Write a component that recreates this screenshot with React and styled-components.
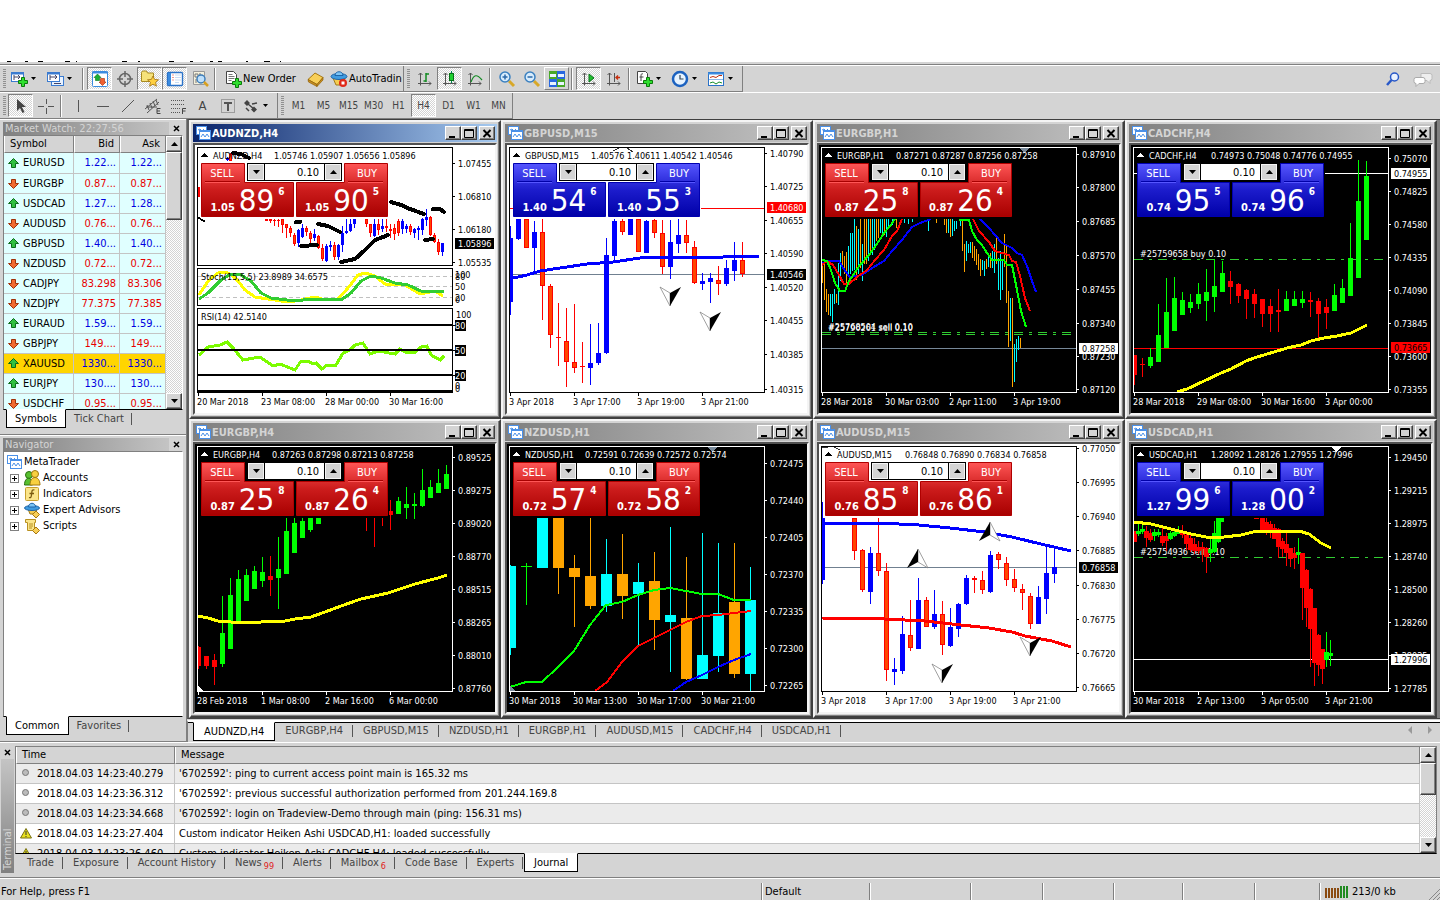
import React, { useState } from 'react';
import styled, { createGlobalStyle, css } from 'styled-components';

// chart series are stored on a grid of 3 units per pixel, origin at the window frame
const gx = v => Math.floor(v / 3) - 7;
const gy = (v, top) => Math.floor(v / 3) - top;
const line = (pts, top) => pts.map(([x, y]) => `${Math.round(x / 3) - 7},${Math.round(y / 3) - top}`).join(' ');

const RED = { fill: '#ff0000', inner: '#ff4500' };
const BLUE = { fill: '#0000ff' };
const LIME = { fill: '#00ff00' };
const PURERED = { fill: '#ff0000' };
const AQUA = { fill: '#00ffff' };
const ORANGE = { fill: '#ffa500' };
const kinds = { r: RED, b: BLUE, g: LIME, p: PURERED, c: AQUA, o: ORANGE };

// candle: [kind, x, high, bodyTop, bodyBottom, low]
const charts = [
    {
        name: 'AUDNZD,H4', active: true, theme: 'light', top: 27, panes: true, bodyWidth: 3,
        infoX: 79, info: '1.05746 1.05907 1.05656 1.05896',
        panel: 'red', sell: ['1.05', '89', '6'], buy: ['1.05', '90', '5'],
        axis: [['1.07455', 135], ['1.06810', 235], ['1.06180', 334], ['1.05535', 433]],
        tags: [['1.05896', 376, '#000', '#fff']],
        dates: ['20 Mar 2018', '23 Mar 08:00', '28 Mar 00:00', '30 Mar 16:00'],
        candles: [
            ['r', 31, 207, 207, 238, 238], ['b', 117, 118, 122, 128, 130], ['r', 127, 105, 108, 128, 130],
            ['r', 235, 303, 303, 308, 308], ['r', 247, 303, 303, 309, 315], ['r', 259, 303, 308, 312, 325], ['r', 271, 303, 308, 312, 328],
            ['r', 283, 303, 303, 320, 345], ['r', 295, 318, 320, 332, 360], ['r', 307, 325, 330, 345, 358], ['r', 319, 345, 352, 378, 385],
            ['b', 331, 335, 338, 378, 388], ['b', 343, 318, 330, 357, 360], ['r', 355, 325, 330, 342, 355], ['r', 367, 340, 345, 362, 385],
            ['b', 379, 335, 350, 362, 370], ['r', 391, 352, 355, 390, 395], ['r', 403, 380, 390, 423, 430], ['b', 415, 380, 384, 428, 435],
            ['b', 427, 370, 382, 388, 400], ['r', 439, 372, 382, 417, 425], ['b', 451, 378, 382, 418, 425], ['b', 463, 325, 346, 383, 402],
            ['b', 475, 305, 340, 346, 350], ['b', 487, 305, 320, 341, 345], ['b', 499, 303, 303, 319, 331], ['r', 535, 303, 305, 320, 328],
            ['r', 547, 318, 320, 348, 356], ['b', 559, 305, 320, 355, 360], ['r', 571, 305, 318, 335, 352], ['b', 583, 305, 325, 335, 345],
            ['r', 595, 305, 325, 330, 345], ['r', 607, 320, 335, 340, 363], ['r', 619, 318, 332, 350, 365], ['r', 631, 305, 310, 345, 355],
            ['b', 643, 305, 310, 335, 350], ['b', 655, 318, 325, 335, 345], ['r', 667, 318, 325, 342, 350], ['b', 679, 330, 335, 348, 360],
            ['b', 691, 325, 332, 338, 368], ['b', 703, 300, 303, 335, 350], ['b', 715, 275, 297, 305, 325], ['r', 727, 295, 297, 350, 355],
            ['r', 739, 345, 352, 372, 375], ['r', 751, 365, 372, 402, 412], ['b', 763, 375, 376, 402, 415],
        ],
        lines: [
            ['#000', 4, [[610, 252], [640, 262], [665, 272], [708, 287]]], ['#000', 4, [[735, 272], [755, 272], [768, 281]]],
            ['#000', 4, [[325, 312], [336, 312]]], ['#000', 4, [[338, 383], [386, 381]]],
            ['#000', 4, [[390, 317], [420, 325], [457, 343]]],
            ['#000', 4, [[460, 433], [500, 422], [530, 396], [560, 367], [585, 358], [600, 350]]],
            ['#000', 4, [[710, 367], [735, 362]]], ['#000', 4, [[135, 105], [160, 107], [182, 120]]], ['#000', 2, [[33, 300], [48, 308]]],
        ],
    },
    {
        name: 'GBPUSD,M15', theme: 'light', top: 27, bodyWidth: 5,
        infoX: 84, info: '1.40576 1.40611 1.40542 1.40546',
        panel: 'blue', sell: ['1.40', '54', '6'], buy: ['1.40', '55', '3'],
        axis: [['1.40790', 106], ['1.40725', 205], ['1.40655', 307], ['1.40590', 407], ['1.40520', 509], ['1.40455', 608], ['1.40385', 709], ['1.40315', 814]],
        tags: [['1.40680', 268, '#ff0000', '#fff'], ['1.40546', 470, '#000', '#fff']],
        levels: [['#ff0000', 270], ['#708090', 469]],
        dates: ['3 Apr 2018', '3 Apr 17:00', '3 Apr 19:00', '3 Apr 21:00'],
        candles: [
            ['b', 31, 324, 360, 551, 592], ['b', 55, 303, 303, 362, 367], ['r', 79, 303, 303, 391, 391], ['b', 103, 310, 343, 391, 462],
            ['r', 127, 303, 343, 506, 605], ['r', 151, 500, 504, 650, 692], ['r', 175, 555, 658, 662, 743], ['r', 199, 570, 670, 734, 806],
            ['r', 223, 558, 733, 751, 764], ['r', 247, 672, 744, 748, 795], ['b', 271, 618, 735, 750, 800], ['b', 295, 615, 706, 737, 742],
            ['b', 319, 360, 411, 704, 707], ['b', 343, 303, 309, 413, 431], ['r', 367, 305, 309, 343, 353], ['b', 391, 303, 303, 350, 350],
            ['r', 415, 303, 303, 403, 403], ['b', 439, 306, 309, 404, 404], ['r', 463, 305, 307, 346, 362], ['r', 487, 307, 346, 449, 470],
            ['b', 511, 307, 373, 449, 483], ['b', 535, 303, 351, 377, 405], ['r', 559, 307, 352, 377, 406], ['r', 583, 370, 388, 497, 500],
            ['b', 607, 465, 490, 500, 515], ['b', 631, 466, 480, 491, 557], ['r', 655, 444, 487, 500, 531], ['b', 679, 426, 450, 497, 503],
            ['b', 703, 372, 426, 458, 488], ['r', 727, 372, 427, 470, 476],
        ],
        lines: [['#0000ff', 3, [[30, 480], [55, 478], [80, 470], [120, 460], [180, 450], [260, 439], [340, 432], [420, 421], [500, 417], [670, 418], [690, 414], [778, 414]]]],
        arrows: [['down', 511, 508], ['down', 631, 583]],
        specks: [[340, 100, 358, 90], [383, 90, 400, 102]],
    },
    {
        name: 'EURGBP,H1', theme: 'dark', top: 27, bodyWidth: 1,
        infoX: 77, info: '0.87271 0.87287 0.87256 0.87258',
        panel: 'red', sell: ['0.87', '25', '8'], buy: ['0.87', '26', '4'],
        axis: [['0.87910', 108], ['0.87800', 208], ['0.87685', 310], ['0.87570', 412], ['0.87455', 514], ['0.87340', 616], ['0.87230', 716], ['0.87120', 814]],
        tags: [['0.87258', 691, '#fff', '#000']],
        levels: [['#778899', 691]],
        orders: [['#25768504 sell 0.10', 643], ['#25790261 sell 0.10', 649]],
        marker: '#778899',
        dates: ['28 Mar 2018', '30 Mar 03:00', '2 Apr 11:00', '3 Apr 19:00'],
        bars: {
            '#ffa500': [[31, 440, 497], [37, 440, 548], [43, 515, 585], [49, 530, 592], [73, 530, 558], [91, 400, 452], [97, 415, 470], [103, 402, 495], [133, 325, 488], [145, 303, 450], [157, 305, 440], [163, 303, 438], [175, 303, 412], [193, 303, 370], [199, 303, 360], [217, 303, 350], [253, 303, 330], [373, 303, 315], [397, 303, 322], [403, 303, 345], [415, 303, 358], [451, 303, 398], [457, 378, 463], [481, 372, 420], [487, 385, 430], [493, 395, 442], [499, 408, 455], [505, 425, 475], [523, 425, 455], [535, 405, 450], [553, 362, 440], [577, 350, 450], [583, 385, 555], [589, 520, 688], [601, 540, 806], [625, 662, 692]],
            '#00ffff': [[55, 528, 595], [61, 530, 615], [67, 515, 560], [79, 435, 562], [85, 405, 490], [109, 385, 475], [115, 345, 468], [121, 345, 460], [127, 303, 455], [139, 335, 470], [151, 380, 492], [169, 303, 430], [181, 303, 410], [187, 303, 395], [205, 303, 345], [211, 303, 345], [223, 303, 357], [229, 303, 330], [241, 303, 320], [277, 303, 315], [289, 303, 318], [301, 303, 312], [349, 303, 340], [409, 303, 345], [421, 303, 355], [427, 310, 340], [433, 310, 335], [445, 303, 325], [463, 370, 430], [469, 380, 408], [475, 372, 405], [511, 428, 458], [517, 430, 475], [529, 418, 448], [541, 400, 450], [547, 380, 468], [559, 420, 515], [565, 400, 548], [571, 430, 518], [595, 540, 668], [607, 678, 792], [613, 665, 733], [619, 655, 698]],
        },
        candles: [],
        lines: [
            ['#0000ff', 2, [[30, 435], [50, 428], [80, 430], [100, 460], [115, 478], [150, 472], [180, 450], [215, 430], [240, 400], [270, 365], [300, 328], [325, 315], [358, 303]]],
            ['#0000ff', 2, [[505, 303], [530, 330], [570, 375], [600, 390], [615, 405], [630, 410], [645, 445], [660, 490], [673, 522]]],
            ['#ff0000', 2, [[30, 440], [45, 430], [62, 440], [80, 470], [95, 498], [112, 498], [135, 478], [165, 455], [190, 425], [215, 395], [240, 355], [255, 340], [270, 303]]],
            ['#ff0000', 2, [[483, 303], [500, 340], [530, 372], [550, 400], [590, 412], [600, 430], [612, 432], [625, 475], [640, 540], [655, 578]]],
            ['#00ff00', 2, [[30, 427], [45, 430], [58, 455], [70, 495], [85, 520], [98, 520], [112, 490], [145, 440], [170, 410], [200, 370], [215, 345], [235, 325], [248, 303]]],
            ['#00ff00', 2, [[440, 306], [470, 306], [480, 340], [495, 365], [510, 380], [525, 405], [540, 425], [575, 427], [585, 440], [600, 440], [607, 470], [618, 530], [628, 580], [642, 628]]],
        ],
    },
    {
        name: 'CADCHF,H4', theme: 'dark', top: 27, bodyWidth: 5,
        infoX: 80, info: '0.74973 0.75048 0.74776 0.74955',
        panel: 'blue', sell: ['0.74', '95', '5'], buy: ['0.74', '96', '6'],
        axis: [['0.75070', 121], ['0.74825', 220], ['0.74580', 319], ['0.74335', 418], ['0.74090', 517], ['0.73845', 616], ['0.73600', 716], ['0.73355', 814]],
        tags: [['0.74955', 166, '#fff', '#000'], ['0.73665', 689, '#ff0000', '#000']],
        levels: [['#fff', 166], ['#ff0000', 691]],
        orders: [['#25759658 buy 0.10', 424]],
        dates: ['28 Mar 2018', '29 Mar 08:00', '30 Mar 16:00', '3 Apr 00:00'],
        candles: [
            ['p', 31, 712, 712, 771, 803], ['p', 55, 722, 740, 743, 780], ['g', 79, 692, 717, 744, 752], ['g', 103, 560, 651, 731, 732],
            ['g', 127, 480, 582, 690, 690], ['g', 151, 477, 540, 639, 640], ['g', 175, 522, 546, 591, 591], ['g', 199, 530, 552, 570, 588],
            ['g', 223, 495, 530, 561, 572], ['g', 247, 453, 522, 549, 608], ['g', 271, 425, 504, 537, 585], ['g', 295, 430, 465, 522, 522],
            ['p', 319, 459, 491, 510, 557], ['p', 343, 497, 498, 533, 557], ['p', 367, 513, 516, 543, 603], ['p', 391, 515, 528, 557, 603],
            ['p', 415, 543, 543, 587, 626], ['p', 439, 543, 564, 587, 641], ['p', 463, 513, 576, 581, 641], ['g', 487, 521, 543, 579, 579],
            ['g', 511, 519, 543, 564, 564], ['g', 535, 519, 543, 555, 570], ['p', 559, 522, 546, 551, 597], ['p', 583, 540, 549, 587, 660],
            ['p', 607, 545, 567, 584, 636], ['g', 631, 498, 531, 579, 579], ['g', 655, 483, 510, 555, 555], ['g', 679, 315, 420, 534, 534],
            ['g', 703, 126, 249, 480, 480], ['g', 727, 129, 174, 366, 366],
        ],
        lines: [['#ffff00', 3, [[158, 823], [190, 812], [240, 790], [290, 765], [320, 752], [365, 730], [400, 717], [450, 703], [490, 690], [530, 680], [560, 668], [600, 660], [640, 655], [680, 645], [730, 620]]]],
    },
    {
        name: 'EURGBP,H4', theme: 'dark', top: 26, bodyWidth: 5,
        infoX: 77, info: '0.87263 0.87298 0.87213 0.87258',
        panel: 'red', sell: ['0.87', '25', '8'], buy: ['0.87', '26', '4'],
        axis: [['0.89525', 118], ['0.89275', 217], ['0.89020', 316], ['0.88770', 415], ['0.88515', 514], ['0.88265', 613], ['0.88010', 712], ['0.87760', 811]],
        tags: [], corner: '#fff',
        dates: ['28 Feb 2018', '1 Mar 08:00', '2 Mar 16:00', '6 Mar 00:00'],
        candles: [
            ['p', 31, 686, 688, 744, 755], ['p', 55, 714, 714, 743, 752], ['p', 79, 708, 726, 746, 800], ['g', 103, 534, 645, 738, 746],
            ['g', 127, 480, 531, 692, 692], ['g', 151, 456, 483, 609, 610], ['g', 175, 453, 471, 549, 549], ['g', 199, 444, 459, 513, 513],
            ['g', 223, 417, 462, 489, 507], ['p', 247, 414, 474, 485, 533], ['g', 271, 357, 453, 480, 572], ['g', 295, 300, 339, 468, 468],
            ['g', 319, 300, 315, 405, 405], ['g', 343, 300, 309, 360, 360], ['g', 367, 300, 300, 335, 342], ['g', 391, 300, 300, 318, 318],
            ['p', 535, 300, 280, 290, 339], ['p', 559, 300, 280, 290, 386], ['p', 583, 300, 280, 290, 323], ['p', 607, 248, 279, 292, 339],
            ['g', 631, 237, 249, 288, 288], ['g', 655, 207, 258, 270, 303], ['g', 679, 225, 258, 264, 303], ['g', 703, 153, 216, 263, 266],
            ['g', 727, 186, 207, 240, 240], ['g', 751, 153, 195, 225, 225], ['g', 775, 141, 168, 213, 213],
        ],
        lines: [['#ffff00', 3, [[30, 595], [60, 600], [90, 608], [130, 613], [220, 613], [245, 610], [265, 613], [290, 610], [320, 602], [370, 597], [410, 583], [460, 563], [520, 544], [600, 524], [680, 497], [750, 480], [777, 471]]]],
    },
    {
        name: 'NZDUSD,H1', theme: 'dark', top: 26, bodyWidth: 11,
        infoX: 78, info: '0.72591 0.72639 0.72572 0.72574',
        panel: 'red', sell: ['0.72', '57', '4'], buy: ['0.72', '58', '2'],
        axis: [['0.72475', 136], ['0.72440', 247], ['0.72405', 358], ['0.72370', 469], ['0.72335', 580], ['0.72300', 691], ['0.72265', 802]],
        tags: [], marker: '#778899', corner: '#778899',
        dates: ['30 Mar 2018', '30 Mar 13:00', '30 Mar 17:00', '30 Mar 21:00'],
        candles: [
            ['c', 31, 441, 444, 690, 711], ['g', 79, 437, 444, 446, 564], ['c', 127, 300, 300, 450, 450], ['o', 175, 300, 300, 450, 528],
            ['o', 223, 411, 450, 477, 627], ['o', 271, 300, 474, 564, 573], ['c', 319, 363, 468, 564, 582], ['o', 367, 348, 468, 534, 603],
            ['c', 415, 435, 492, 528, 680], ['o', 463, 402, 489, 606, 696], ['c', 511, 327, 591, 612, 762], ['o', 559, 417, 600, 783, 785],
            ['c', 607, 345, 711, 783, 783], ['c', 655, 375, 585, 714, 762], ['o', 703, 375, 552, 768, 780], ['c', 751, 447, 546, 768, 820],
        ],
        lines: [
            ['#00ff00', 2, [[30, 808], [79, 793], [127, 791], [175, 746], [223, 700], [271, 620], [319, 560], [367, 552], [415, 530], [463, 516], [511, 509], [559, 520], [607, 527], [655, 528], [703, 545], [753, 546]]],
            ['#ff0000', 2, [[285, 820], [320, 793], [367, 733], [415, 683], [463, 661], [511, 635], [559, 612], [607, 595], [655, 592], [703, 586], [753, 580]]],
            ['#0000ff', 2, [[520, 820], [559, 793], [607, 772], [655, 748], [703, 727], [753, 707]]],
        ],
    },
    {
        name: 'AUDUSD,M15', theme: 'light', top: 26, bodyWidth: 5,
        infoX: 86, info: '0.76848 0.76890 0.76834 0.76858',
        panel: 'red', sell: ['0.76', '85', '8'], buy: ['0.76', '86', '1'],
        axis: [['0.77050', 91], ['0.76995', 193], ['0.76940', 295], ['0.76885', 397], ['0.76830', 502], ['0.76775', 604], ['0.76720', 706], ['0.76665', 808]],
        tags: [['0.76858', 448, '#000', '#fff']],
        levels: [['#708090', 448]],
        dates: ['3 Apr 2018', '3 Apr 17:00', '3 Apr 19:00', '3 Apr 21:00'],
        candles: [
            ['b', 31, 252, 300, 485, 497], ['r', 127, 300, 300, 398, 425], ['r', 151, 395, 397, 518, 524], ['b', 175, 387, 405, 521, 557],
            ['r', 199, 300, 406, 461, 474], ['r', 223, 435, 460, 758, 789], ['b', 247, 720, 753, 761, 801], ['b', 271, 594, 648, 758, 768],
            ['r', 295, 546, 652, 691, 698], ['b', 319, 480, 546, 692, 692], ['r', 343, 538, 546, 626, 628], ['b', 367, 516, 588, 626, 634],
            ['r', 391, 549, 589, 683, 710], ['b', 415, 570, 629, 687, 687], ['b', 439, 555, 558, 632, 656], ['b', 463, 471, 480, 557, 560],
            ['r', 487, 474, 481, 488, 524], ['r', 511, 459, 487, 518, 527], ['b', 535, 399, 411, 521, 524], ['r', 559, 402, 409, 428, 452],
            ['r', 583, 417, 436, 488, 504], ['r', 607, 453, 484, 512, 521], ['r', 631, 498, 514, 527, 576], ['r', 655, 525, 535, 620, 632],
            ['b', 679, 504, 537, 617, 618], ['b', 703, 380, 465, 542, 590], ['b', 727, 390, 447, 467, 494],
        ],
        lines: [
            ['#0000ff', 3, [[30, 314], [200, 314], [320, 322], [415, 329], [520, 343], [600, 357], [700, 380], [778, 400]]],
            ['#ff0000', 3, [[30, 601], [220, 602], [340, 610], [420, 618], [530, 631], [600, 643], [640, 655], [720, 670], [778, 688]]],
        ],
        arrows: [['up', 319, 393], ['up', 535, 312], ['down', 391, 738], ['down', 655, 659]],
        specks: [[31, 92, 48, 87], [66, 87, 84, 98]],
    },
    {
        name: 'USDCAD,H1', theme: 'dark', top: 26, bodyWidth: 5,
        infoX: 80, info: '1.28092 1.28126 1.27955 1.27996',
        panel: 'blue', sell: ['1.27', '99', '6'], buy: ['1.28', '00', '2'],
        axis: [['1.29450', 118], ['1.29215', 217], ['1.28975', 316], ['1.28740', 415], ['1.28500', 514], ['1.28260', 613], ['1.28025', 712], ['1.27785', 811]],
        tags: [['1.27996', 724, '#fff', '#000']],
        levels: [['#fff', 724]],
        orders: [['#25754936 sell 0.10', 418]],
        marker: '#fff',
        dates: ['30 Mar 2018', '2 Apr 13:00', '3 Apr 05:00', '3 Apr 21:00'],
        candles: [
            ['p', 31, 340, 340, 372, 372], ['g', 43, 310, 340, 350, 355], ['g', 55, 318, 335, 345, 348], ['p', 67, 325, 340, 360, 388],
            ['p', 79, 335, 345, 365, 375], ['g', 91, 335, 343, 355, 372], ['g', 103, 335, 342, 350, 360], ['p', 115, 330, 355, 375, 385],
            ['p', 127, 345, 355, 370, 400], ['g', 139, 340, 347, 365, 368], ['g', 151, 335, 342, 355, 360], ['g', 163, 325, 340, 348, 350],
            ['p', 175, 322, 342, 352, 362], ['p', 187, 340, 352, 380, 398], ['p', 199, 350, 360, 395, 405], ['p', 211, 362, 378, 400, 410],
            ['p', 223, 370, 388, 400, 410], ['p', 235, 372, 388, 395, 432], ['p', 247, 388, 392, 418, 465], ['g', 259, 365, 395, 408, 435],
            ['g', 271, 310, 345, 403, 405], ['g', 283, 300, 300, 373, 375], ['g', 293, 300, 300, 312, 312], ['p', 397, 300, 300, 303, 303],
            ['p', 415, 300, 300, 338, 340], ['p', 427, 300, 314, 345, 350], ['p', 439, 310, 318, 345, 360], ['p', 451, 320, 330, 362, 365],
            ['p', 463, 330, 335, 388, 420], ['p', 475, 360, 370, 393, 418], ['p', 487, 345, 378, 405, 445], ['p', 499, 390, 392, 425, 447],
            ['p', 511, 388, 405, 420, 455], ['g', 523, 362, 402, 412, 440], ['p', 535, 405, 405, 510, 605], ['p', 547, 455, 456, 570, 628],
            ['p', 559, 510, 513, 632, 747], ['p', 571, 570, 570, 735, 803], ['p', 583, 650, 651, 740, 777], ['p', 595, 693, 693, 752, 798],
            ['g', 607, 642, 702, 725, 747], ['g', 619, 668, 705, 714, 745],
        ],
        lines: [['#ffff00', 3, [[30, 311], [80, 318], [140, 332], [200, 347], [260, 360], [300, 358], [350, 350], [400, 338], [460, 338], [500, 340], [525, 338], [555, 348], [590, 375], [622, 391]]]],
    },
];

const stochFast = [[32, 530], [60, 490], [90, 465], [115, 462], [135, 475], [150, 490], [170, 515], [200, 538], [240, 542], [300, 552], [340, 547], [380, 536], [410, 547], [450, 543], [480, 510], [510, 470], [530, 466], [560, 475], [590, 497], [650, 500], [695, 528], [740, 518], [765, 535]];
const stochSlow = [[32, 542], [60, 525], [100, 485], [130, 467], [160, 470], [190, 490], [220, 525], [250, 541], [320, 550], [370, 543], [460, 545], [490, 525], [520, 490], [550, 473], [580, 480], [620, 495], [660, 500], [700, 520], [767, 522]];
const rsi = [[32, 710], [60, 687], [95, 680], [118, 672], [135, 690], [165, 725], [215, 716], [255, 745], [275, 738], [322, 755], [340, 730], [360, 730], [375, 738], [385, 735], [403, 752], [418, 740], [445, 740], [465, 705], [485, 697], [500, 682], [525, 676], [545, 707], [570, 700], [620, 707], [635, 692], [650, 703], [680, 703], [700, 687], [716, 684], [730, 710], [755, 725], [767, 715]];

const quotes = [
    ['EURUSD', '1.22...', '1.22...', true], ['EURGBP', '0.87...', '0.87...', false], ['USDCAD', '1.27...', '1.28...', true],
    ['AUDUSD', '0.76...', '0.76...', false], ['GBPUSD', '1.40...', '1.40...', true], ['NZDUSD', '0.72...', '0.72...', false],
    ['CADJPY', '83.298', '83.306', false], ['NZDJPY', '77.375', '77.385', false], ['EURAUD', '1.59...', '1.59...', true],
    ['GBPJPY', '149....', '149....', false], ['XAUUSD', '1330...', '1330...', true], ['EURJPY', '130....', '130....', true],
    ['USDCHF', '0.95...', '0.95...', false],
];

const journal = [
    ['info', '2018.04.03 14:23:40.279', "'6702592': ping to current access point main is 165.32 ms"],
    ['info', '2018.04.03 14:23:36.312', "'6702592': previous successful authorization performed from 201.244.169.8"],
    ['info', '2018.04.03 14:23:34.668', "'6702592': login on Tradeview-Demo through main (ping: 156.31 ms)"],
    ['warn', '2018.04.03 14:23:27.404', 'Custom indicator Heiken Ashi USDCAD,H1: loaded successfully'],
    ['warn', '2018.04.03 14:23:26.460', 'Custom indicator Heiken Ashi CADCHF,H4: loaded successfully'],
];

const chartTabs = ['AUDNZD,H4', 'EURGBP,H4', 'GBPUSD,M15', 'NZDUSD,H1', 'EURGBP,H1', 'AUDUSD,M15', 'CADCHF,H4', 'USDCAD,H1'];
const terminalTabs = [['Trade'], ['Exposure'], ['Account History'], ['News', '99'], ['Alerts'], ['Mailbox', '6'], ['Code Base'], ['Experts'], ['Journal']];
const periods = ['M1', 'M5', 'M15', 'M30', 'H1', 'H4', 'D1', 'W1', 'MN'];

/* ---------- icons ---------- */

const Ico = ({ children, w = 18, h = 18 }) => <svg width={w} height={h} viewBox={`0 0 ${w} ${h}`} aria-hidden="true">{children}</svg>;
const Plus = ({ x, y }) => <path transform={`translate(${x} ${y})`} d="M3.5.5h3v3h3v3h-3v3h-3v-3h-3v-3h3z" fill="#2fe02f" stroke="#0a7a0a" />;
const Axes = () => <path d="M4.500 3v12.500M2.500 5l2-2 2 2M2 13.500h13M13 11.500l2 2-2 2" fill="none" stroke="#555" />;
const MiniChart = () => (
    <>
        <rect x="1.500" y="2.500" width="12" height="9" fill="#fff" stroke="#3a7bd0" /><path d="M1 3.500h13" stroke="#3a7bd0" strokeWidth="2" />
    </>
);
const icons = {
    newChart: <Ico><MiniChart /><path d="M4 5v5M4 7h6M8 5l2 2-2 2" stroke="#446" fill="none" /><Plus x={8} y={7} /></Ico>,
    profiles: <Ico><rect x="5.500" y="6.500" width="12" height="9" fill="#e8f2ff" stroke="#3a7bd0" /><MiniChart /><path d="M4 5v5M4 7h7M9 5l2 2-2 2M8 13.500h7" stroke="#446" fill="none" /></Ico>,
    market: <Ico><rect x="1.500" y="1.500" width="15" height="15" rx="1" fill="#fff" stroke="#3a8be0" /><path d="M1 2.500h16" stroke="#3a8be0" strokeWidth="2" /><path d="M6.500 4l3.500 3.500H8.500v3h-4v-3H3z" fill="#18b030" stroke="#087018" strokeWidth=".6" /><path d="M11.500 15.500L8 12h1.500V8.500h4V12H15z" fill="#f06030" stroke="#a02808" strokeWidth=".6" /></Ico>,
    target: <Ico><circle cx="9" cy="9" r="5.500" fill="none" stroke="#666" strokeWidth="1.500" /><path d="M9 1v6M9 11v6M1 9h6M11 9h6" stroke="#666" strokeWidth="1.500" /></Ico>,
    folderStar: <Ico><path d="M.5 11.500v-9l1-1.500h4l1 2h6v8.500z" fill="#f6e27a" stroke="#a98a20" /><path d="M12 6l1.600 3.400 3.900.4-2.900 2.500.8 3.900-3.400-2-3.400 2 .8-3.900-2.900-2.500 3.900-.4z" fill="#ffd040" stroke="#a07010" strokeWidth=".8" /></Ico>,
    terminal: <Ico><rect x="1.500" y="2.500" width="15" height="13" rx="1" fill="#fff" stroke="#2a72c8" strokeWidth="1.400" /><rect x="2" y="3" width="3" height="12" fill="#3a8be0" /><path d="M6.500 5h1M6.500 7.500h1M6.500 10h1" stroke="#e03020" /><path d="M9 5h6M9 7.500h6M9 10h6M9 12.500h4" stroke="#c8dcf4" /></Ico>,
    tester: <Ico><path d="M2.500 1.500h11v13h-11z" fill="#f4f0dc" stroke="#999" /><path d="M4 4h3v3H4zM9 3v8M5 9v4" stroke="#777" fill="none" /><circle cx="10" cy="9" r="4" fill="#bfe0fb" stroke="#3a7bb8" strokeWidth="1.400" /><path d="M13 12l4 4" stroke="#d8a020" strokeWidth="2.500" /></Ico>,
    order: <Ico><path d="M2.500 1.500h7l3 3v9h-10z" fill="#fff" stroke="#444" /><path d="M4.500 4.500h4M4.500 6.500h6M4.500 8.500h6M4.500 10.500h3" stroke="#777" /><Plus x={8} y={8} /></Ico>,
    book: <Ico><path d="M1 9.500l7-6.500 8 4.500-6 7z" fill="#f8cf58" stroke="#a87810" /><path d="M1 9.500l.5 2.500 8.500 4.500V14.500zM10 14.500l6-7v2.500l-6 6.500z" fill="#c89020" stroke="#906008" strokeWidth=".7" /></Ico>,
    auto: <Ico><path d="M3 8l3 7h6l3-7z" fill="#f5cc50" stroke="#a07a18" /><ellipse cx="9" cy="6.500" rx="8" ry="3" fill="#3f9be0" stroke="#1f65a8" /><path d="M5 5.500c0-5 8-5 8 0z" fill="#7cc4f5" stroke="#1f65a8" /><circle cx="13" cy="13" r="4" fill="#e02818" /><rect x="11.500" y="11.500" width="3" height="3" fill="#fff" /></Ico>,
    bars: <Ico><Axes /><path d="M10 3v9M10 4h3M7.500 11H10" stroke="#128a22" strokeWidth="1.500" fill="none" /></Ico>,
    candles: <Ico><Axes /><path d="M10.500 1v12" stroke="#085" /><rect x="8.500" y="3.500" width="4" height="7" fill="#20d030" stroke="#087018" /></Ico>,
    lineChart: <Ico><Axes /><path d="M5 12c3-8 6-8 11-2" stroke="#128a22" fill="none" strokeWidth="1.200" /></Ico>,
    zoomIn: <Ico><path d="M11 11l5 5" stroke="#d8a828" strokeWidth="3" /><circle cx="7" cy="7" r="5" fill="#d8ecfc" stroke="#3a80c0" strokeWidth="1.500" /><path d="M4.500 7h5M7 4.500v5" stroke="#2a68a8" strokeWidth="1.500" /></Ico>,
    zoomOut: <Ico><path d="M11 11l5 5" stroke="#d8a828" strokeWidth="3" /><circle cx="7" cy="7" r="5" fill="#d8ecfc" stroke="#3a80c0" strokeWidth="1.500" /><path d="M4.500 7h5" stroke="#2a68a8" strokeWidth="1.500" /></Ico>,
    tile: <Ico><rect x="1" y="1" width="8" height="8" fill="#48a828" /><rect x="9" y="1" width="8" height="8" fill="#2868e0" /><rect x="1" y="9" width="8" height="8" fill="#2868e0" /><rect x="9" y="9" width="8" height="8" fill="#48a828" /><path d="M2 4h6v3H2zM10 4h6v3h-6zM2 12h6v3H2zM10 12h6v3h-6z" fill="#e8f4ff" /></Ico>,
    scroll: <Ico><Axes /><path d="M9 4l5 4-5 4z" fill="#20c030" stroke="#087018" /></Ico>,
    shift: <Ico><Axes /><path d="M9.500 3v9" stroke="#555" /><path d="M15 7.500h-4M13 5.500l-2 2 2 2" stroke="#c83010" strokeWidth="1.400" fill="none" /></Ico>,
    indicators: <Ico><path d="M2.500 1.500h8l2 2v10h-10z" fill="#fff" stroke="#444" /><path d="M8 4c-2-1-2 1-2 3v4M4.500 7h4" fill="none" stroke="#444" /><Plus x={8} y={7} /></Ico>,
    clock: <Ico><circle cx="9" cy="9" r="7" fill="#e8f4ff" stroke="#1c62c0" strokeWidth="2.500" /><path d="M9 5v4h3.500" stroke="#345" fill="none" strokeWidth="1.200" /></Ico>,
    template: <Ico><rect x="1.500" y="2.500" width="15" height="13" fill="#fff" stroke="#2a72c8" /><path d="M1 3.500h16" stroke="#3a8be0" strokeWidth="2" /><path d="M2 9.500h14" stroke="#8ab8e8" /><path d="M3 7.500l3-1 3 1 3-2h3" stroke="#c03010" fill="none" /><path d="M3 13l3-1 3 2 3-2 3 1" stroke="#189028" fill="none" /></Ico>,
    cursor: <Ico><path d="M5 2v12l3-3 2.500 5 2-1-2.500-5h4z" fill="#444" /></Ico>,
    cross: <Ico><path d="M9.500 2v5M9.500 11v6M1 9.500h6M11 9.500h6" stroke="#555" /></Ico>,
    vline: <Ico><path d="M9.500 3v12" stroke="#555" /></Ico>,
    hline: <Ico><path d="M3 9.500h12" stroke="#555" /></Ico>,
    trend: <Ico><path d="M3 15L15 3" stroke="#555" /></Ico>,
    channel: <Ico><path d="M1 12L13 2M3 16L15 5M3 8l2 5M6 6l2 5M9 4l2 5M12 3l2 5M2 10h11" stroke="#555" fill="none" /><path d="M16.500 11.500H13v5h3.500M13 14h3" stroke="#444" fill="none" /></Ico>,
    fibo: <Ico><path d="M2 3.500h13M2 7.500h13M2 11.500h9M2 15.500h9" stroke="#555" strokeDasharray="1 1" /><path d="M13.500 17v-5.500H17M13.500 14h3" stroke="#444" fill="none" /></Ico>,
    labelBox: <Ico><rect x="2.500" y="2.500" width="13" height="13" fill="none" stroke="#666" strokeDasharray="1 1" /><path d="M5 6h8M9 6v8" stroke="#555" strokeWidth="2" /></Ico>,
    arrows: <Ico><path d="M2 6l3-3 3 3-3 3zM9 12.500l3-3 3 3-3 3z" fill="#444" /><path d="M6 7l6 5M10 7l5-1M4 11l3 3" stroke="#444" strokeWidth="1.500" /></Ico>,
};

const DocIcon = () => (
    <Ico w={15} h={14}>
        <rect x=".5" y=".5" width="10" height="8" fill="#fff" stroke="#4a90e8" /><path d="M2 4l2-1 2 2 2-2" fill="none" stroke="#4a90e8" />
        <rect x="3.500" y="4.500" width="11" height="9" fill="#fff" stroke="#4a90e8" /><path d="M3 5.500h12" stroke="#4a90e8" />
        <path d="M5 11l2-3 2 3 2-3 2 3" fill="none" stroke="#4a90e8" />
    </Ico>
);
const TrendIcon = ({ up }) => (
    <Ico w={11} h={11}>
        {up
            ? <path d="M5.500.5l5 5h-3v4h-4v-4h-3z" fill="#30c040" stroke="#0a6a18" />
            : <path d="M5.500 10.500l5-5h-3v-4h-4v4h-3z" fill="#f06a30" stroke="#a03008" />}
    </Ico>
);
const Caret = ({ up }) => <Ico w={7} h={4}><path d={up ? 'M0 4l3.500-4L7 4z' : 'M0 0h7L3.500 4z'} fill="#000" /></Ico>;
const Cross = () => <Ico w={7} h={7}><path d="M1 1l5 5M6 1L1 6" stroke="#000" strokeWidth="1.500" /></Ico>;

/* ---------- chart drawing ---------- */

function Candle({ data, width, top }) {
    const [kind, x, high, a, b, low] = data;
    const { fill, inner } = kinds[kind];
    const cx = gx(x);
    const half = (width - 1) / 2;
    const left = Math.max(3, cx - half);
    const w = cx + half + 1 - left;
    const y = gy(a, top);
    const h = Math.max(1, Math.round((b - a) / 3));
    return (
        <g>
            <rect x={cx} y={gy(high, top)} width="1" height={Math.max(1, Math.round((low - high) / 3))} fill={fill} />
            <rect x={left} y={y} width={w} height={h} fill={fill} />
            {inner && w > 2 && h > 2 && <rect x={left + 1} y={y + 1} width={w - 2} height={h - 2} fill={inner} />}
        </g>
    );
}

function Arrow({ dir, x, y, top }) {
    const cx = gx(x);
    const cy = gy(y, top);
    const place = dir === 'up' ? `translate(${cx} ${cy + 19}) scale(1 -1)` : `translate(${cx} ${cy})`;
    // the filled half faces left on up arrows and right on down arrows
    const side = dir === 'up' ? 'scale(-1 1)' : undefined;
    return (
        <g transform={place} shapeRendering="auto">
            <g transform={side}>
                <path d="M0 6L-10 0L0 19z" fill="#fff" stroke="#777" strokeWidth=".7" />
                <path d="M0 6L11 0L0 19z" fill="#000" />
            </g>
        </g>
    );
}

function Indicators() {
    return (
        <g>
            <path d="M2 160.500h255M2 123.500h255M2 163.500h255" stroke="#000" />
            <path d="M2 120.500h255" stroke="#000" />
            <path d="M2 121h256v2H2zM2 161h256v2H2z" fill="#fff" />
            <path d="M3 131.500h254M3 141.500h254M3 152.500h254" stroke="#c0c0c0" strokeDasharray="4 3" />
            <polyline points={line(stochFast, 27)} fill="none" stroke="#ffff00" strokeWidth="3" />
            <polyline points={line(stochSlow, 27)} fill="none" stroke="#32cd32" strokeWidth="3" />
            <polyline points={line(rsi, 27)} fill="none" stroke="#7cfc00" strokeWidth="3" />
            <path d="M3 180h255M3 205h255M3 230h255M3 246h255" stroke="#000" strokeWidth="2" />
            <path d="M258 180.500h2M258 205.500h2M258 230.500h2" stroke="#000" />
            <text x="6" y="135">Stoch(15,5,5) 23.8989 34.6575</text>
            <text x="6" y="175">RSI(14) 42.5140</text>
            <text x="260" y="133">100</text><text x="260" y="135">80</text><text x="260" y="145">50</text><text x="260" y="156">20</text><text x="260" y="158">0</text>
            <text x="261" y="173">100</text>
            <path d="M260 175h11v11h-11zM260 200h11v11h-11zM260 225h11v11h-11z" fill="#000" />
            <g fill="#fff"><text x="260" y="184">80</text><text x="260" y="209">50</text><text x="260" y="234">20</text></g>
            <text x="260" y="244">0</text><text x="260" y="247">0</text>
        </g>
    );
}

function ChartPlot({ chart }) {
    const ink = chart.theme === 'dark' ? '#fff' : '#000';
    const { top } = chart;
    return (
        <Plot role="img" aria-label={chart.name} $ink={ink} shapeRendering="crispEdges">
            {(chart.orders || []).map(([label, y], i) => (
                <g key={label}>
                    <text x="9" y={gy(chart.orders[0][1], top) - 2 + i}>{label}</text>
                    <line x1="3" x2="252" y1={gy(y, top) + .5} y2={gy(y, top) + .5} stroke="#32cd32" strokeDasharray="9 6 3 6" />
                </g>
            ))}
            {(chart.levels || []).map(([color, y]) => <rect key={y} x="3" y={gy(y, top)} width="254" height="1" fill={color} />)}
            {chart.bars && Object.entries(chart.bars).map(([color, list]) => list.map(([x, a, b]) => (
                <rect key={x} x={gx(x)} y={gy(a, top)} width="1" height={Math.round((b - a) / 3)} fill={color} />
            )))}
            {chart.candles.map(c => <Candle key={c[1]} data={c} width={chart.bodyWidth} top={top} />)}
            {chart.lines.map(([color, w, pts], i) => (
                <polyline key={i} points={line(pts, top)} fill="none" stroke={color} strokeWidth={w} strokeLinecap={color === '#000' ? 'round' : 'butt'} />
            ))}
            {(chart.arrows || []).map(([dir, x, y]) => <Arrow key={x} dir={dir} x={x} y={y} top={top} />)}
            {(chart.specks || []).map(([x1, y1, x2, y2]) => <line key={x1} x1={gx(x1)} y1={gy(y1, top)} x2={gx(x2)} y2={gy(y2, top)} stroke="#333" />)}
            {chart.marker && <path d="M200 3h10l-5 5z" fill={chart.marker} />}
            {chart.corner && <path d="M3 242v5h5z" fill={chart.corner} />}
            <rect x="2.500" y="2.500" width="255" height="245" fill="none" stroke={ink} />
            {chart.panes && <Indicators />}
            {chart.axis.map(([label, y]) => (
                <g key={label}>
                    <rect x="258" y={gy(y, top)} width="2" height="1" fill={ink} />
                    <text x="263" y={gy(y, top) + 4}>{label}</text>
                </g>
            ))}
            {chart.tags.map(([label, y, bg, fg]) => (
                <g key={label}>
                    <rect x="260" y={gy(y, top) - 5} width="39" height="11" fill={bg} />
                    <text x="263" y={gy(y, top) + 4} style={{ fill: fg }}>{label}</text>
                </g>
            ))}
            {chart.dates.map((label, i) => (
                <g key={label}>
                    <rect x={3 + i * 64} y="248" width="1" height="3" fill={ink} />
                    <text x={2 + i * 64} y="260">{label}</text>
                </g>
            ))}
            <path d="M6 12h7L9.500 8z" fill={ink} />
            <text x="18" y="14">{chart.name}</text>
            <text x={chart.infoX} y="14">{chart.info}</text>
        </Plot>
    );
}

function DealButton({ side, tone, price }) {
    const colors = tone === 'red' ? ['#ff5656', '#cc1c1c', '#a80000', '#b00000'] : ['#5656ff', '#1c1ccc', '#0000a8', '#0000b0'];
    const id = `${tone}-${side}`;
    const shape = side === 'sell' ? 'M.5.5h43v19h49v34H.5z' : 'M48.500.5h43v53H.5v-34h48z';
    const ruleX = side === 'sell' ? 4 : 52;
    return (
        <Deal type="button" $side={side}>
            <DealShape width="93" height="54" aria-hidden="true">
                <defs>
                    <linearGradient id={id} x1="0" y1="0" x2="0" y2="1">
                        <stop offset="0" stopColor={colors[0]} /><stop offset=".5" stopColor={colors[1]} /><stop offset="1" stopColor={colors[2]} />
                    </linearGradient>
                </defs>
                <path d={shape} fill={`url(#${id})`} stroke={colors[3]} />
                <path d={`M${ruleX} 18.500h35`} stroke={colors[2]} /><path d={`M${ruleX} 19.500h35`} stroke={colors[0]} />
            </DealShape>
            <DealLabel>{side.toUpperCase()}</DealLabel>
            <DealPrice>
                <small>{price[0]}</small><strong>{price[1]}</strong><sup>{price[2]}</sup>
            </DealPrice>
        </Deal>
    );
}

function ChartWindow({ chart }) {
    const [volume, setVolume] = useState(0.1);
    return (
        <Window>
            <TitleBar $active={chart.active}>
                <DocIcon />
                <TitleText>{chart.name}</TitleText>
                <WindowButton type="button" aria-label="Minimize"><Ico w={10} h={9}><path d="M1 8h6" stroke="#000" strokeWidth="2" /></Ico></WindowButton>
                <WindowButton type="button" aria-label="Maximize"><Ico w={10} h={9}><path d="M.5.5h9v8h-9zM.5 1.500h9" fill="none" stroke="#000" /></Ico></WindowButton>
                <WindowButton type="button" aria-label="Close" $apart><Ico w={10} h={9}><path d="M1.500 1l7 7M8.500 1l-7 7" stroke="#000" strokeWidth="2" /></Ico></WindowButton>
            </TitleBar>
            <Canvas $theme={chart.theme}>
                <ChartPlot chart={chart} />
                <TradePanel $theme={chart.theme}>
                    <DealButton side="sell" tone={chart.panel} price={chart.sell} />
                    <DealButton side="buy" tone={chart.panel} price={chart.buy} />
                    <Volume>
                        <Spin type="button" aria-label="Decrease volume" onClick={() => setVolume(Math.max(0, volume - 0.01))}><Caret /></Spin>
                        <VolumeInput aria-label={`Volume ${chart.name}`} value={volume.toFixed(2)} onChange={e => setVolume(Number(e.target.value) || 0)} />
                        <Spin type="button" aria-label="Increase volume" onClick={() => setVolume(volume + 0.01)}><Caret up /></Spin>
                    </Volume>
                </TradePanel>
            </Canvas>
        </Window>
    );
}

function ScrollBar() {
    return (
        <Scroll>
            <ScrollButton type="button" aria-label="Scroll up"><Caret up /></ScrollButton>
            <Thumb />
            <ScrollButton type="button" aria-label="Scroll down" $end><Caret /></ScrollButton>
        </Scroll>
    );
}

function Tool({ icon, label, pressed, drop, raised }) {
    return (
        <ToolButton type="button" aria-label={label} $pressed={pressed} $drop={drop} $raised={raised}>
            {icons[icon]}
            {drop && <Ico w={5} h={3}><path d="M0 0h5L2.500 3z" fill="#000" /></Ico>}
        </ToolButton>
    );
}

const treeItems = [
    ['Accounts', <><circle cx="5" cy="5" r="3.500" fill="#58c030" stroke="#287010" /><path d="M.5 15c0-9 8-9 8 0z" fill="#58c030" stroke="#287010" /><circle cx="11" cy="4" r="3.500" fill="#f8d040" stroke="#a07810" /><path d="M6 15c0-10 10-10 10 0z" fill="#f8d040" stroke="#a07810" /></>],
    ['Indicators', <><rect x="1.500" y="1.500" width="13" height="13" rx="1" fill="#fbe58a" stroke="#c8a030" /><path d="M10.500 4c-3-1-2.500 2-3 5s-1 3-2.500 2.500M5.500 7.500h4.500" fill="none" stroke="#7a5a10" strokeWidth="1.300" /></>],
    ['Expert Advisors', <><path d="M4 7l2 5h5l2-5z" fill="#f5cc50" stroke="#a07a18" /><ellipse cx="8" cy="6" rx="7.500" ry="2.500" fill="#3f9be0" stroke="#1f65a8" /><path d="M4.500 5c0-5 7-5 7 0z" fill="#7cc4f5" stroke="#1f65a8" /><path d="M12 9l3.500 3.500L12 16l-3.500-3.500z" fill="#f8cf58" stroke="#a87810" /></>],
    ['Scripts', <><path d="M1.500 1.500h10v3h-1v8h-7v-8h-2z" fill="#fbe58a" stroke="#b89020" /><path d="M5 6h4M5 8h4M5 10h3" stroke="#b89020" /><path d="M12 9l3.500 3.500L12 16l-3.500-3.500z" fill="#f8cf58" stroke="#a87810" /></>],
];

export default function App() {
    const [chartTab, setChartTab] = useState('AUDNZD,H4');
    const [terminalTab, setTerminalTab] = useState('Journal');

    return (
        <Page>
            <GlobalStyle />
            <MenuStrip>
                <svg width="300" height="2" aria-hidden="true">
                    <path d="M7 .5h4M25 .5h3M38 .5h5M65 .5h5M76 .5h1M122 .5h5M138 .5h2M169 .5h5M190 .5h3M210 .5h3M218 .5h4M246 .5h2M264 .5h6M280 .5h1" stroke="#000" />
                </svg>
            </MenuStrip>
            <ToolbarArea>
                <ToolbarRow>
                    <Toolbar>
                        <Grip />
                        <Tool icon="newChart" label="New chart" drop />
                        <Tool icon="profiles" label="Profiles" drop />
                        <Divider />
                        <Tool icon="market" label="Market Watch" pressed />
                        <Tool icon="target" label="Data window" />
                        <Tool icon="folderStar" label="Navigator" pressed />
                        <Tool icon="terminal" label="Terminal" pressed />
                        <Tool icon="tester" label="Strategy tester" />
                        <Divider />
                        <TextTool type="button">{icons.order}New Order</TextTool>
                        <Tool icon="book" label="MetaEditor" />
                        <TextTool type="button" $clip>{icons.auto}AutoTrading</TextTool>
                    </Toolbar>
                    <Toolbar>
                        <Grip />
                        <Tool icon="bars" label="Bar chart" />
                        <Tool icon="candles" label="Candlesticks" pressed />
                        <Tool icon="lineChart" label="Line chart" />
                        <Divider />
                        <Tool icon="zoomIn" label="Zoom in" />
                        <Tool icon="zoomOut" label="Zoom out" />
                        <Tool icon="tile" label="Tile windows" raised />
                        <Divider />
                        <Tool icon="scroll" label="Auto scroll" pressed />
                        <Tool icon="shift" label="Chart shift" />
                        <Divider />
                        <Tool icon="indicators" label="Indicators" drop />
                        <Tool icon="clock" label="Periods" drop />
                        <Tool icon="template" label="Templates" drop />
                    </Toolbar>
                    <Corner>
                        <svg width="14" height="14" aria-hidden="true"><circle cx="8.500" cy="5" r="4" fill="#eaf2ff" stroke="#2858c8" strokeWidth="1.500" /><path d="M5.500 8L1 13" stroke="#2858c8" strokeWidth="2.500" /></svg>
                        <svg width="20" height="15" aria-hidden="true"><path d="M8 1.500h9q2 0 2 2v3q0 2-2 2v3l-3-3H8z" fill="#eee" stroke="#bbb" /><path d="M3 5.500h7q2 0 2 2v2q0 2-2 2H6l-3 3v-3q-2 0-2-2v-2q0-2 2-2z" fill="#fff" stroke="#aaa" /></svg>
                    </Corner>
                </ToolbarRow>
                <ToolbarRow>
                    <Toolbar>
                        <Grip />
                        <Tool icon="cursor" label="Cursor" pressed />
                        <Tool icon="cross" label="Crosshair" />
                        <Divider />
                        <Tool icon="vline" label="Vertical line" />
                        <Tool icon="hline" label="Horizontal line" />
                        <Tool icon="trend" label="Trendline" />
                        <Tool icon="channel" label="Equidistant channel" />
                        <Tool icon="fibo" label="Fibonacci retracement" />
                        <Period type="button" $large>A</Period>
                        <Tool icon="labelBox" label="Text label" />
                        <Tool icon="arrows" label="Arrows" drop />
                    </Toolbar>
                    <Toolbar>
                        <Grip />
                        {periods.map(p => <Period key={p} type="button" $pressed={p === 'H4'}>{p}</Period>)}
                    </Toolbar>
                </ToolbarRow>
            </ToolbarArea>

            <Workspace>
                <Sidebar>
                    <Dock $size="316px">
                        <DockTitle><span>Market Watch: 22:27:56</span><CloseButton type="button" aria-label="Close Market Watch"><Cross /></CloseButton></DockTitle>
                        <DockBody>
                            <TableClip>
                                <QuoteTable>
                                    <colgroup><col /><col width="46" /><col width="46" /></colgroup>
                                    <thead><tr><th scope="col">Symbol</th><th scope="col">Bid</th><th scope="col">Ask</th></tr></thead>
                                    <tbody>
                                        {quotes.map(([symbol, bid, ask, up]) => (
                                            <QuoteRow key={symbol} $up={up} $marked={symbol === 'XAUUSD'}>
                                                <td><SymbolCell><TrendIcon up={up} />{symbol}</SymbolCell></td><td>{bid}</td><td>{ask}</td>
                                            </QuoteRow>
                                        ))}
                                    </tbody>
                                </QuoteTable>
                            </TableClip>
                            <ScrollBar />
                        </DockBody>
                        <Tabs>
                            <Tab type="button" $pad="8px" $active>Symbols</Tab>
                            <Tab type="button" $pad="8px">Tick Chart</Tab>
                        </Tabs>
                    </Dock>
                    <Dock $size="auto">
                        <DockTitle><span>Navigator</span><CloseButton type="button" aria-label="Close Navigator"><Cross /></CloseButton></DockTitle>
                        <DockBody>
                            <Tree>
                                <TreeRoot><DocIcon />MetaTrader</TreeRoot>
                                {treeItems.map(([label, art]) => (
                                    <TreeItem key={label}>
                                        <Expander type="button" aria-label={`Expand ${label}`}><Ico w={7} h={7}><path d="M1 3.500h5M3.500 1v5" stroke="#000" /></Ico></Expander>
                                        <Ico w={17} h={16}>{art}</Ico>
                                        <span>{label}</span>
                                    </TreeItem>
                                ))}
                            </Tree>
                        </DockBody>
                        <Tabs>
                            <Tab type="button" $pad="8px" $active>Common</Tab>
                            <Tab type="button" $pad="8px">Favorites</Tab>
                        </Tabs>
                    </Dock>
                </Sidebar>

                <Main>
                    <Desktop>
                        {charts.map(c => <ChartWindow key={c.name} chart={c} />)}
                    </Desktop>
                    <ChartTabs>
                        {chartTabs.map(t => <Tab key={t} type="button" $pad="10px" $active={t === chartTab} onClick={() => setChartTab(t)}>{t}</Tab>)}
                        <TabArrows><svg width="24" height="8" aria-hidden="true"><path d="M4 0v8L0 4zM20 0v8l4-4z" fill="#999" /></svg></TabArrows>
                    </ChartTabs>
                </Main>
            </Workspace>

            <Terminal>
                <TerminalSide>
                    <CloseButton type="button" aria-label="Close Terminal"><Cross /></CloseButton>
                    <SideLabel>Terminal</SideLabel>
                </TerminalSide>
                <TerminalMain>
                    <TerminalBody>
                        <TableClip>
                            <JournalTable>
                                <colgroup><col width="159" /><col /></colgroup>
                                <thead><tr><th scope="col">Time</th><th scope="col">Message</th></tr></thead>
                                <tbody>
                                    {journal.map(([kind, time, message]) => (
                                        <tr key={time}>
                                            <td>
                                                <TimeCell>
                                                    {kind === 'info'
                                                        ? <Ico w={12} h={11}><circle cx="5.500" cy="4.500" r="3" fill="#bbb" stroke="#777" /></Ico>
                                                        : <Ico w={12} h={11}><path d="M6 .5l5.500 9.500H.5z" fill="#e8e020" stroke="#777010" /><path d="M6 3v4M6 8v1" stroke="#333" /></Ico>}
                                                    {time}
                                                </TimeCell>
                                            </td>
                                            <td>{message}</td>
                                        </tr>
                                    ))}
                                </tbody>
                            </JournalTable>
                        </TableClip>
                        <ScrollBar />
                    </TerminalBody>
                    <Tabs $gap="1px">
                        {terminalTabs.map(([label, count]) => (
                            <Tab key={label} type="button" $pad="9px" $active={label === terminalTab} onClick={() => setTerminalTab(label)}>
                                {label}{count && <Count>{count}</Count>}
                            </Tab>
                        ))}
                    </Tabs>
                </TerminalMain>
            </Terminal>

            <StatusBar>
                <StatusText>For Help, press F1</StatusText>
                <StatusCell $w="108px">Default</StatusCell>
                <StatusCell $w="101px" /><StatusCell $w="72px" /><StatusCell $w="71px" /><StatusCell $w="69px" /><StatusCell $w="72px" /><StatusCell $w="65px" />
                <StatusCell $w="121px">
                    <svg width="26" height="13" aria-hidden="true">
                        {[0, 1, 2, 3, 4, 5, 6, 7].map(i => <rect key={i} x={2 + i * 3} y={i < 5 ? 2 : 0} width="2" height={i < 5 ? 10 : 12} fill={i < 5 ? '#8a4a10' : '#208a20'} />)}
                    </svg>
                    213/0 kb
                </StatusCell>
                <svg width="12" height="12" aria-hidden="true"><path d="M0 12L12 0M4 12l8-8M8 12l4-4" stroke="#888" /></svg>
            </StatusBar>
        </Page>
    );
}

/* ---------- styles ---------- */

const face = '#d4d4d4';
const bevel = css`
    border: 1px solid;
    border-color: #fff #404040 #404040 #fff;
    box-shadow: inset -1px -1px 0 #808080;
`;
const dither = 'repeating-conic-gradient(#fff 0 25%, #d4d4d4 0 50%) 0 0 / 2px 2px';

const GlobalStyle = createGlobalStyle`
    * {
        box-sizing: border-box;
    }
    body {
        margin: 0;
        background: #fff;
        color: #000;
        font: 11px/14px 'DejaVu Sans Condensed', 'DejaVu Sans', sans-serif;
    }
    button, input {
        font: inherit;
        color: inherit;
        padding: 0;
        margin: 0;
        border: 0;
        border-radius: 0;
        background: none;
        white-space: nowrap;
    }
    svg {
        display: block;
        flex: none;
    }
`;

const Page = styled.div`
    display: flex;
    flex-direction: column;
    min-height: 100vh;
`;

const MenuStrip = styled.div`
    height: 64px;
    padding-top: 61px;
    background: linear-gradient(#fff 62px, ${face} 62px);
`;

const ToolbarArea = styled.header`
    background: ${face};
    border-top: 1px solid #808080;
    height: 55px;
`;

const ToolbarRow = styled.div`
    display: flex;
    height: 27px;
    border-top: 1px solid #fff;
`;

const Toolbar = styled.div`
    display: flex;
    align-items: center;
    padding: 0 1px 0 3px;
    border-right: 1px solid #808080;
    border-bottom: 1px solid #808080;
`;

const Grip = styled.i`
    width: 3px;
    height: 20px;
    margin-right: 2px;
    background: repeating-linear-gradient(#909090 0 1px, ${face} 1px 2px);
`;

const pressedLook = css`
    background: ${dither};
    border: 1px solid;
    border-color: #808080 #fff #fff #808080;
`;

const ToolButton = styled.button`
    display: flex;
    align-items: center;
    justify-content: center;
    width: 25px;
    height: 23px;
    ${props => props.$drop && css`
        justify-content: flex-start;
        gap: 3px;
        width: 36px;
        padding-left: 2px;
    `}
    ${props => props.$pressed && pressedLook}
    ${props => props.$raised && css`
        border: 1px solid;
        border-color: #fff #808080 #808080 #fff;
    `}
`;

const TextTool = styled.button`
    display: flex;
    align-items: center;
    gap: 1px;
    width: ${props => props.$clip ? '74px' : '84px'};
    height: 23px;
    padding-left: ${props => props.$clip ? '2px' : '5px'};
    overflow: hidden;
`;

const Divider = styled.i`
    width: 2px;
    height: 22px;
    margin: 0 3px 0 2px;
    border-left: 1px solid #808080;
    border-right: 1px solid #fff;
`;

const Corner = styled.div`
    display: flex;
    align-items: center;
    gap: 13px;
    margin-left: auto;
    padding-right: 7px;
`;

const Period = styled.button`
    width: 25px;
    height: 23px;
    color: #444;
    font-size: ${props => props.$large ? '13px' : '10px'};
    ${props => props.$pressed && pressedLook}
`;

const Workspace = styled.div`
    display: flex;
    flex: 1;
    background: ${face};
`;

const Sidebar = styled.aside`
    display: flex;
    flex-direction: column;
    width: 187px;
    border-right: 1px solid #808080;
`;

const Dock = styled.section`
    display: flex;
    flex-direction: column;
    height: ${props => props.$size};
    flex: ${props => props.$size === 'auto' ? 1 : 'none'};
    padding: 1px 3px 5px;
    border-top: 1px solid #fff;
    border-bottom: 1px solid #808080;
`;

const DockTitle = styled.header`
    display: flex;
    align-items: center;
    height: 14px;

    span {
        flex: 1;
        height: 13px;
        padding-left: 2px;
        color: #d4d4d4;
        line-height: 13px;
        background: linear-gradient(90deg, #808080, #c4c4c4);
    }
`;

const CloseButton = styled.button`
    display: flex;
    align-items: center;
    justify-content: center;
    width: 14px;
    height: 13px;
`;

const DockBody = styled.div`
    display: flex;
    flex: 1;
    min-height: 0;
    background: #fff;
    border: 1px solid #808080;
    border-right-color: #fff;
    border-bottom: 1px solid #000;
`;

const TableClip = styled.div`
    flex: 1;
    height: 0;
    min-height: 100%;
    overflow: hidden;
`;

const tableBase = css`
    width: 100%;
    table-layout: fixed;
    border-collapse: separate;
    border-spacing: 0;

    th {
        height: 17px;
        padding: 0 5px;
        font-weight: normal;
        text-align: left;
        background: ${face};
        border-bottom: 1px solid #808080;
        border-left: 1px solid #fff;
        border-right: 1px solid #808080;
    }
    td {
        height: 20px;
        padding: 0 4px;
        border-bottom: 1px solid #c4c4c4;
        border-right: 1px solid #c4c4c4;
        white-space: nowrap;
        overflow: hidden;
    }
`;

const QuoteTable = styled.table`
    ${tableBase}

    tbody tr:first-child td {
        height: 21px;
    }
    th + th, td + td {
        text-align: right;
    }
    td + td {
        padding: 0 3px 0 0;
    }
`;

const QuoteRow = styled.tr`
    background: ${props => props.$marked ? '#ffd500' : '#e0ffff'};

    td + td {
        color: ${props => props.$up ? '#0000e0' : '#e80000'};
    }
`;

const SymbolCell = styled.span`
    display: flex;
    align-items: center;
    gap: 4px;
`;

const Scroll = styled.div`
    display: flex;
    flex-direction: column;
    width: 16px;
    background: ${dither};
`;

const ScrollButton = styled.button`
    display: flex;
    align-items: center;
    justify-content: center;
    height: 16px;
    margin-top: ${props => props.$end ? 'auto' : 0};
    background: ${face};
    ${bevel}
`;

const Thumb = styled.i`
    height: 25%;
    min-height: 32px;
    background: ${face};
    ${bevel}
`;

const Tabs = styled.div`
    display: flex;
    gap: ${props => props.$gap || 0};
    height: 19px;
    padding-left: 3px;
`;

const Tab = styled.button`
    height: 18px;
    padding: 0 ${props => props.$pad};
    color: ${props => props.$active ? '#000' : '#444'};
    background: linear-gradient(#555, #555) right center / 1px 12px no-repeat;
    ${props => props.$active && css`
        margin-top: -1px;
        height: 19px;
        background: #fff;
        border: 1px solid #000;
        border-top-color: #fff;
    `}
`;

const Count = styled.sub`
    margin-left: 2px;
    color: #e02020;
    font-size: 9px;
    line-height: 0;
    vertical-align: -3px;
`;

const Tree = styled.ul`
    margin: 0;
    padding: 1px 0 0 3px;
    list-style: none;
`;

const TreeRoot = styled.li`
    display: flex;
    align-items: center;
    gap: 2px;
    height: 17px;
`;

const TreeItem = styled.li`
    display: flex;
    align-items: center;
    gap: 2px;
    height: 16px;
    padding-left: 3px;

    > svg {
        margin-left: 3px;
    }
`;

const Expander = styled.button`
    display: flex;
    width: 9px;
    height: 9px;
    background: #fff;
    border: 1px solid #808080;
`;

const Main = styled.main`
    display: flex;
    flex-direction: column;
    flex: 1;
    min-width: 0;
`;

const Desktop = styled.div`
    display: grid;
    flex: 1;
    grid-template-columns: repeat(4, 1fr);
    grid-auto-rows: 1fr;
    padding-right: 3px;
    background: #808080;
    border-top: 1px solid #404040;
    border-left: 2px solid #606060;
    border-bottom: 1px solid #404040;
`;

const Window = styled.section`
    display: flex;
    flex-direction: column;
    gap: 1px;
    min-width: 0;
    min-height: 299px;
    padding: 2px;
    background: ${face};
    border: 2px solid;
    border-color: #f4f4f4 #404040 #404040 #f4f4f4;
    box-shadow: inset -1px -1px 0 #808080;
`;

const TitleBar = styled.header`
    display: flex;
    align-items: center;
    height: 18px;
    padding: 0 2px 0 3px;
    color: ${props => props.$active ? '#fff' : '#d4d4d4'};
    background: ${props => props.$active ? 'linear-gradient(90deg, #0a246a, #a6caf0)' : 'linear-gradient(90deg, #808080, #c4c4c4)'};
`;

const TitleText = styled.h2`
    flex: 1;
    margin: 2px 0 0 1px;
    font-size: 11px;
    line-height: 14px;
    font-weight: bold;
`;

const WindowButton = styled.button`
    display: flex;
    align-items: center;
    justify-content: center;
    width: 16px;
    height: 14px;
    margin-left: ${props => props.$apart ? '2px' : 0};
    background: ${face};
    ${bevel}
`;

const Canvas = styled.div`
    position: relative;
    flex: 1;
    display: flex;
    overflow: hidden;
    background: ${props => props.$theme === 'dark' ? '#000' : '#fff'};
    border: 2px solid;
    border-color: #505050 #f4f4f4 #f4f4f4 #505050;
`;

const Plot = styled.svg`
    flex: 1;
    width: 100%;
    height: auto;

    text {
        font-size: 9px;
        fill: ${props => props.$ink};
    }
    g[fill="#fff"] text {
        fill: #fff;
    }
`;

const TradePanel = styled.div`
    position: absolute;
    left: 6px;
    top: 18px;
    display: flex;
    gap: 2px;
    width: 188px;
    height: 56px;
    background: ${props => props.$theme === 'dark' ? '#000' : '#fff'};
`;

const Deal = styled.button`
    position: relative;
    display: flex;
    flex-direction: column;
    align-items: ${props => props.$side === 'sell' ? 'flex-start' : 'flex-end'};
    width: ${props => props.$side === 'sell' ? '93px' : '92px'};
    height: 54px;
    color: #fff;
`;

const DealShape = styled.svg`
    position: absolute;
    inset: 0;
`;

const DealLabel = styled.span`
    position: relative;
    width: 42px;
    height: 20px;
    line-height: 22px;
    text-align: center;
`;

const DealPrice = styled.span`
    position: relative;
    display: flex;
    align-items: baseline;
    justify-content: center;
    gap: 4px;
    width: 100%;
    height: 34px;
    line-height: 34px;

    small {
        font-size: 11px;
        font-weight: bold;
    }
    strong {
        font-size: 31px;
        font-weight: normal;
    }
    sup {
        align-self: flex-start;
        font-size: 10px;
        line-height: 18px;
        font-weight: bold;
    }
`;

const Volume = styled.div`
    position: absolute;
    left: 46px;
    top: 0;
    display: flex;
    width: 95px;
    height: 18px;
    border: 1px solid #000;
    background: #fff;
`;

const Spin = styled.button`
    display: flex;
    align-items: center;
    justify-content: center;
    width: 16px;
    background: ${face};
    border: 1px solid #f4f4f4;
`;

const VolumeInput = styled.input`
    flex: 1;
    min-width: 0;
    padding: 2px 5px 0 0;
    color: #000;
    text-align: right;
    border: solid #000;
    border-width: 0 1px;
`;

const ChartTabs = styled.nav`
    display: flex;
    height: 22px;
    margin-top: 1px;
    padding-left: 5px;
    border-top: 2px solid #fff;
    box-shadow: inset 0 1px 0 #000;
    border-left: 1px solid #808080;

    button {
        margin-top: 0;
    }
`;

const TabArrows = styled.span`
    margin: 4px 8px 0 auto;
`;

const Terminal = styled.section`
    display: flex;
    height: 136px;
    padding: 3px 3px 4px 0;
    background: ${face};
    border-top: 1px solid #fff;
    border-bottom: 1px solid #808080;
`;

const TerminalSide = styled.div`
    display: flex;
    flex-direction: column;
    width: 15px;
`;

const SideLabel = styled.span`
    flex: 1;
    width: 13px;
    margin-left: 1px;
    padding-top: 3px;
    color: #d4d4d4;
    line-height: 13px;
    writing-mode: vertical-rl;
    transform: rotate(180deg);
    background: linear-gradient(#808080, #c4c4c4);
`;

const TerminalMain = styled.div`
    display: flex;
    flex-direction: column;
    flex: 1;
    min-width: 0;
`;

const TerminalBody = styled.div`
    display: flex;
    flex: 1;
    min-height: 0;
    background: #fff;
    border: 1px solid #808080;
    border-bottom-color: #000;
`;

const JournalTable = styled.table`
    ${tableBase}

    tbody tr:nth-child(odd) {
        background: #ebebeb;
    }
`;

const TimeCell = styled.span`
    display: flex;
    align-items: center;
    gap: 5px;
`;

const StatusBar = styled.footer`
    display: flex;
    align-items: center;
    height: 23px;
    background: ${face};
    border-top: 1px solid #fff;

    > svg {
        align-self: flex-end;
        margin-left: -12px;
    }
`;

const StatusText = styled.span`
    flex: 1;
    padding-left: 1px;
    margin-top: 4px;
`;

const StatusCell = styled.span`
    display: flex;
    align-items: center;
    gap: 3px;
    width: ${props => props.$w};
    height: 18px;
    margin-top: 4px;
    padding-left: 3px;
    border-left: 1px solid #808080;
    box-shadow: inset 1px 0 0 #fff;
`;
